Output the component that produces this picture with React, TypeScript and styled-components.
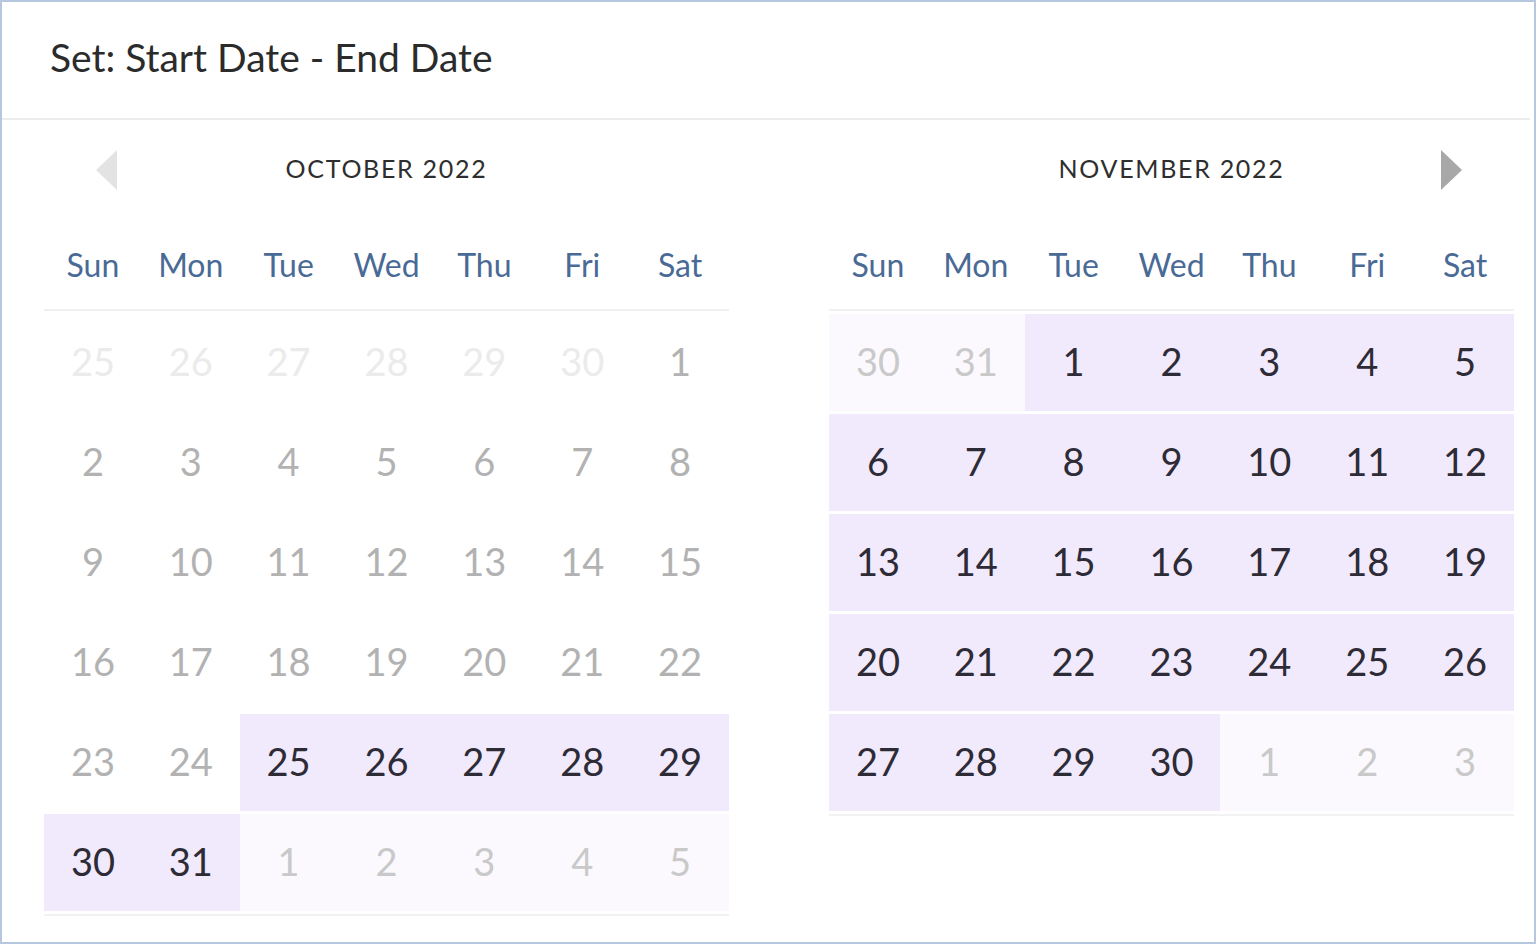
import styled, { createGlobalStyle } from "styled-components";

const GlobalStyle = createGlobalStyle`
  html, body {
    margin: 0;
    padding: 0;
    background: #ffffff;
  }
  * {
    box-sizing: border-box;
  }
`;

const Frame = styled.div`
  width: 1536px;
  height: 944px;
  border: 2px solid #b6c8e0;
  background: #ffffff;
  font-family: Lato, "Noto Sans", sans-serif;
  display: flex;
  flex-direction: column;
`;

const Header = styled.div`
  height: 118px;
  padding: 0 48px 6px;
  display: flex;
  align-items: center;
  border-bottom: 2px solid #ececec;
  margin-right: 4px;
`;

const Title = styled.h1`
  margin: 0;
  font-size: 39px;
  font-weight: 400;
  color: #2b2b2b;
  letter-spacing: 0;
`;

const Calendars = styled.div`
  display: flex;
  gap: 100px;
  padding: 0 20px 0 42px;
`;

const Month = styled.div`
  width: 685px;
  display: flex;
  flex-direction: column;
`;

const MonthBar = styled.div`
  height: 100px;
  padding: 0 52px 4px;
  display: flex;
  align-items: center;
`;

const ArrowSlot = styled.div`
  width: 21px;
  height: 40px;
  display: flex;
  align-items: center;
  margin-top: 4px;
`;

const MonthName = styled.div`
  flex: 1;
  text-align: center;
  font-size: 25px;
  font-weight: 400;
  letter-spacing: 1.7px;
  color: #2e2e2e;
`;

const WeekHead = styled.div`
  height: 91px;
  display: grid;
  grid-template-columns: repeat(7, 1fr);
  align-items: center;
  border-bottom: 2px solid #f0f0f0;
`;

const WeekDay = styled.div`
  text-align: center;
  font-size: 32px;
  color: #4a6a96;
`;

const Days = styled.div`
  display: grid;
  grid-template-columns: repeat(7, 1fr);
  grid-auto-rows: 97px;
  row-gap: 3px;
  padding: 3px 0;
  border-bottom: 2px solid #f2f2f2;
`;

type Tone = "range" | "early" | "faint" | "gone";

const tones: Record<Tone, { bg: string; fg: string }> = {
  range: { bg: "#f1e9fc", fg: "#2d2b36" },
  early: { bg: "#ffffff", fg: "#b2b2b2" },
  faint: { bg: "#fbf9fe", fg: "#c9c9c9" },
  gone: { bg: "#ffffff", fg: "#ebebeb" },
};

const Day = styled.div<{ $tone: Tone }>`
  display: flex;
  align-items: center;
  justify-content: center;
  padding-bottom: 4px;
  font-size: 38px;
  background: ${(p) => tones[p.$tone].bg};
  color: ${(p) => tones[p.$tone].fg};
`;

const WEEKDAYS = ["Sun", "Mon", "Tue", "Wed", "Thu", "Fri", "Sat"];
const MONTHS = ["JANUARY", "FEBRUARY", "MARCH", "APRIL", "MAY", "JUNE", "JULY", "AUGUST", "SEPTEMBER", "OCTOBER", "NOVEMBER", "DECEMBER"];
const minDate = new Date(2022, 9, 25);

function buildWeeks(year: number, month: number) {
  const first = new Date(year, month, 1);
  const start = new Date(year, month, 1 - first.getDay());
  const last = new Date(year, month + 1, 0);
  const cells: { date: Date; tone: Tone }[] = [];
  const cur = new Date(start);
  while (cur <= last || cur.getDay() !== 0) {
    const d = new Date(cur);
    const outside = d.getMonth() !== month;
    const early = d < minDate;
    let tone: Tone;
    if (outside) tone = early ? "gone" : "faint";
    else tone = early ? "early" : "range";
    cells.push({ date: d, tone });
    cur.setDate(cur.getDate() + 1);
  }
  return cells;
}

function Triangle({ dir, color }: { dir: "left" | "right"; color: string }) {
  return (
    <svg width="21" height="40" viewBox="0 0 21 40">
      {dir === "left" ? <polygon points="21,0 21,40 0,20" fill={color} /> : <polygon points="0,0 0,40 21,20" fill={color} />}
    </svg>
  );
}

function MonthView({ year, month, prev, next }: { year: number; month: number; prev?: boolean; next?: boolean }) {
  const cells = buildWeeks(year, month);
  return (
    <Month>
      <MonthBar>
        <ArrowSlot>{prev ? <Triangle dir="left" color="#e3e3e3" /> : null}</ArrowSlot>
        <MonthName>
          {MONTHS[month]} {year}
        </MonthName>
        <ArrowSlot>{next ? <Triangle dir="right" color="#a8a8a8" /> : null}</ArrowSlot>
      </MonthBar>
      <WeekHead>
        {WEEKDAYS.map((w) => (
          <WeekDay key={w}>{w}</WeekDay>
        ))}
      </WeekHead>
      <Days>
        {cells.map((c) => (
          <Day key={c.date.toISOString()} $tone={c.tone}>
            {c.date.getDate()}
          </Day>
        ))}
      </Days>
    </Month>
  );
}

export default function App() {
  return (
    <Frame>
      <GlobalStyle />
      <Header>
        <Title>Set: Start Date - End Date</Title>
      </Header>
      <Calendars>
        <MonthView year={2022} month={9} prev />
        <MonthView year={2022} month={10} next />
      </Calendars>
    </Frame>
  );
}
